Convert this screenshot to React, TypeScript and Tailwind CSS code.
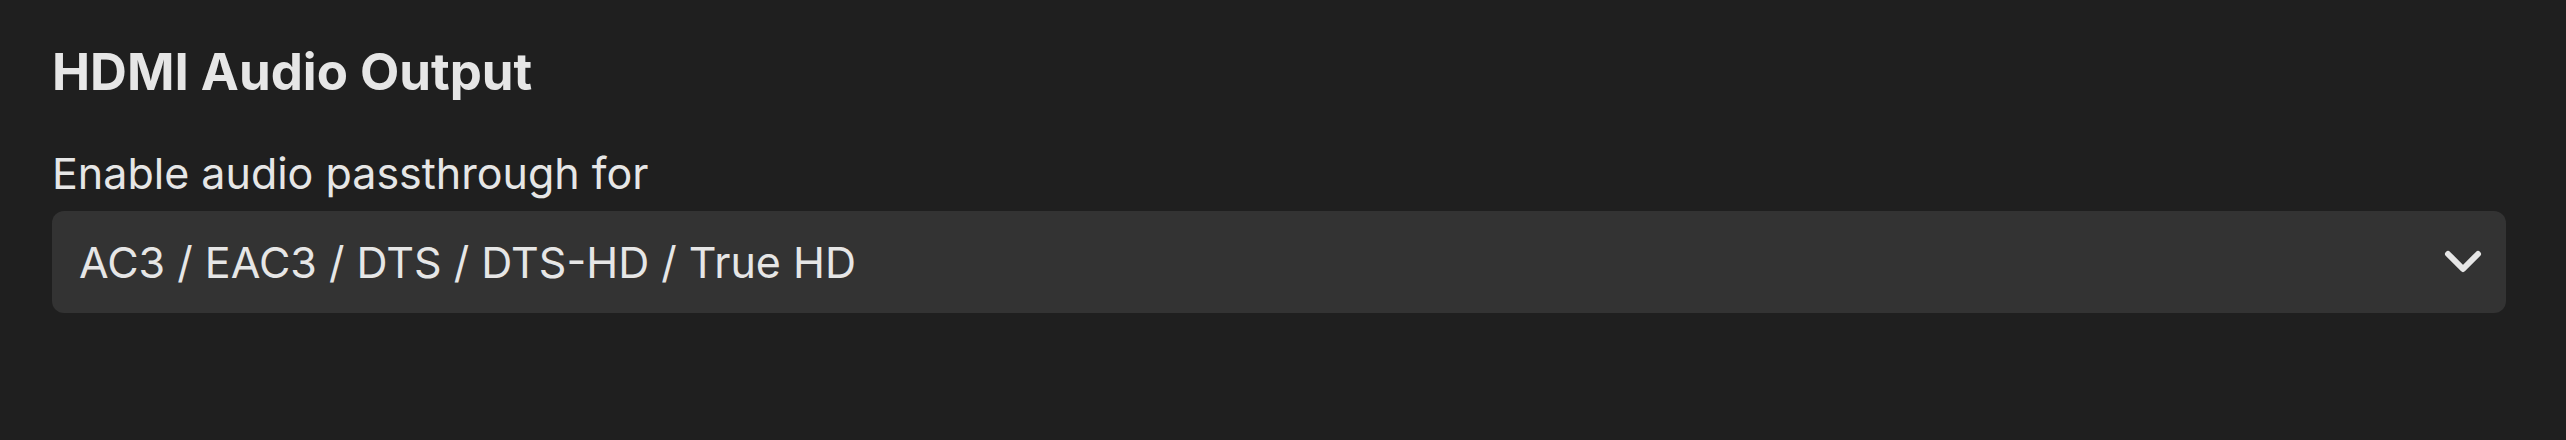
import React from 'react';

const Chevron: React.FC = () => (
  <svg width="38" height="24" viewBox="0 0 38 24" fill="none" className="shrink-0">
    <path d="M4 4 L19 19 L34 4" stroke="#e6e6e6" strokeWidth="6" strokeLinecap="round" strokeLinejoin="round" />
  </svg>
);

const App: React.FC = () => {
  return (
    <div
      className="w-full h-[440px] bg-[#1f1f1f] text-[#e6e6e6] pl-[52px] pr-[60px] pt-[40px]"
      style={{ fontFamily: 'Inter, "Noto Sans", sans-serif' }}
    >
      {/* Section title */}
      <h2 className="text-[51px] font-bold leading-[64px]">HDMI Audio Output</h2>

      {/* Passthrough select */}
      <div className="mt-[43px]">
        <label className="block text-[43px] leading-[52px]">Enable audio passthrough for</label>
        <button className="mt-[12px] w-full h-[102px] rounded-[12px] bg-[#333333] flex items-center justify-between pl-[27px] pr-[24px]">
          <span className="text-[43px]">AC3 / EAC3 / DTS / DTS-HD / True HD</span>
          <Chevron />
        </button>
      </div>
    </div>
  );
};

export default App;
